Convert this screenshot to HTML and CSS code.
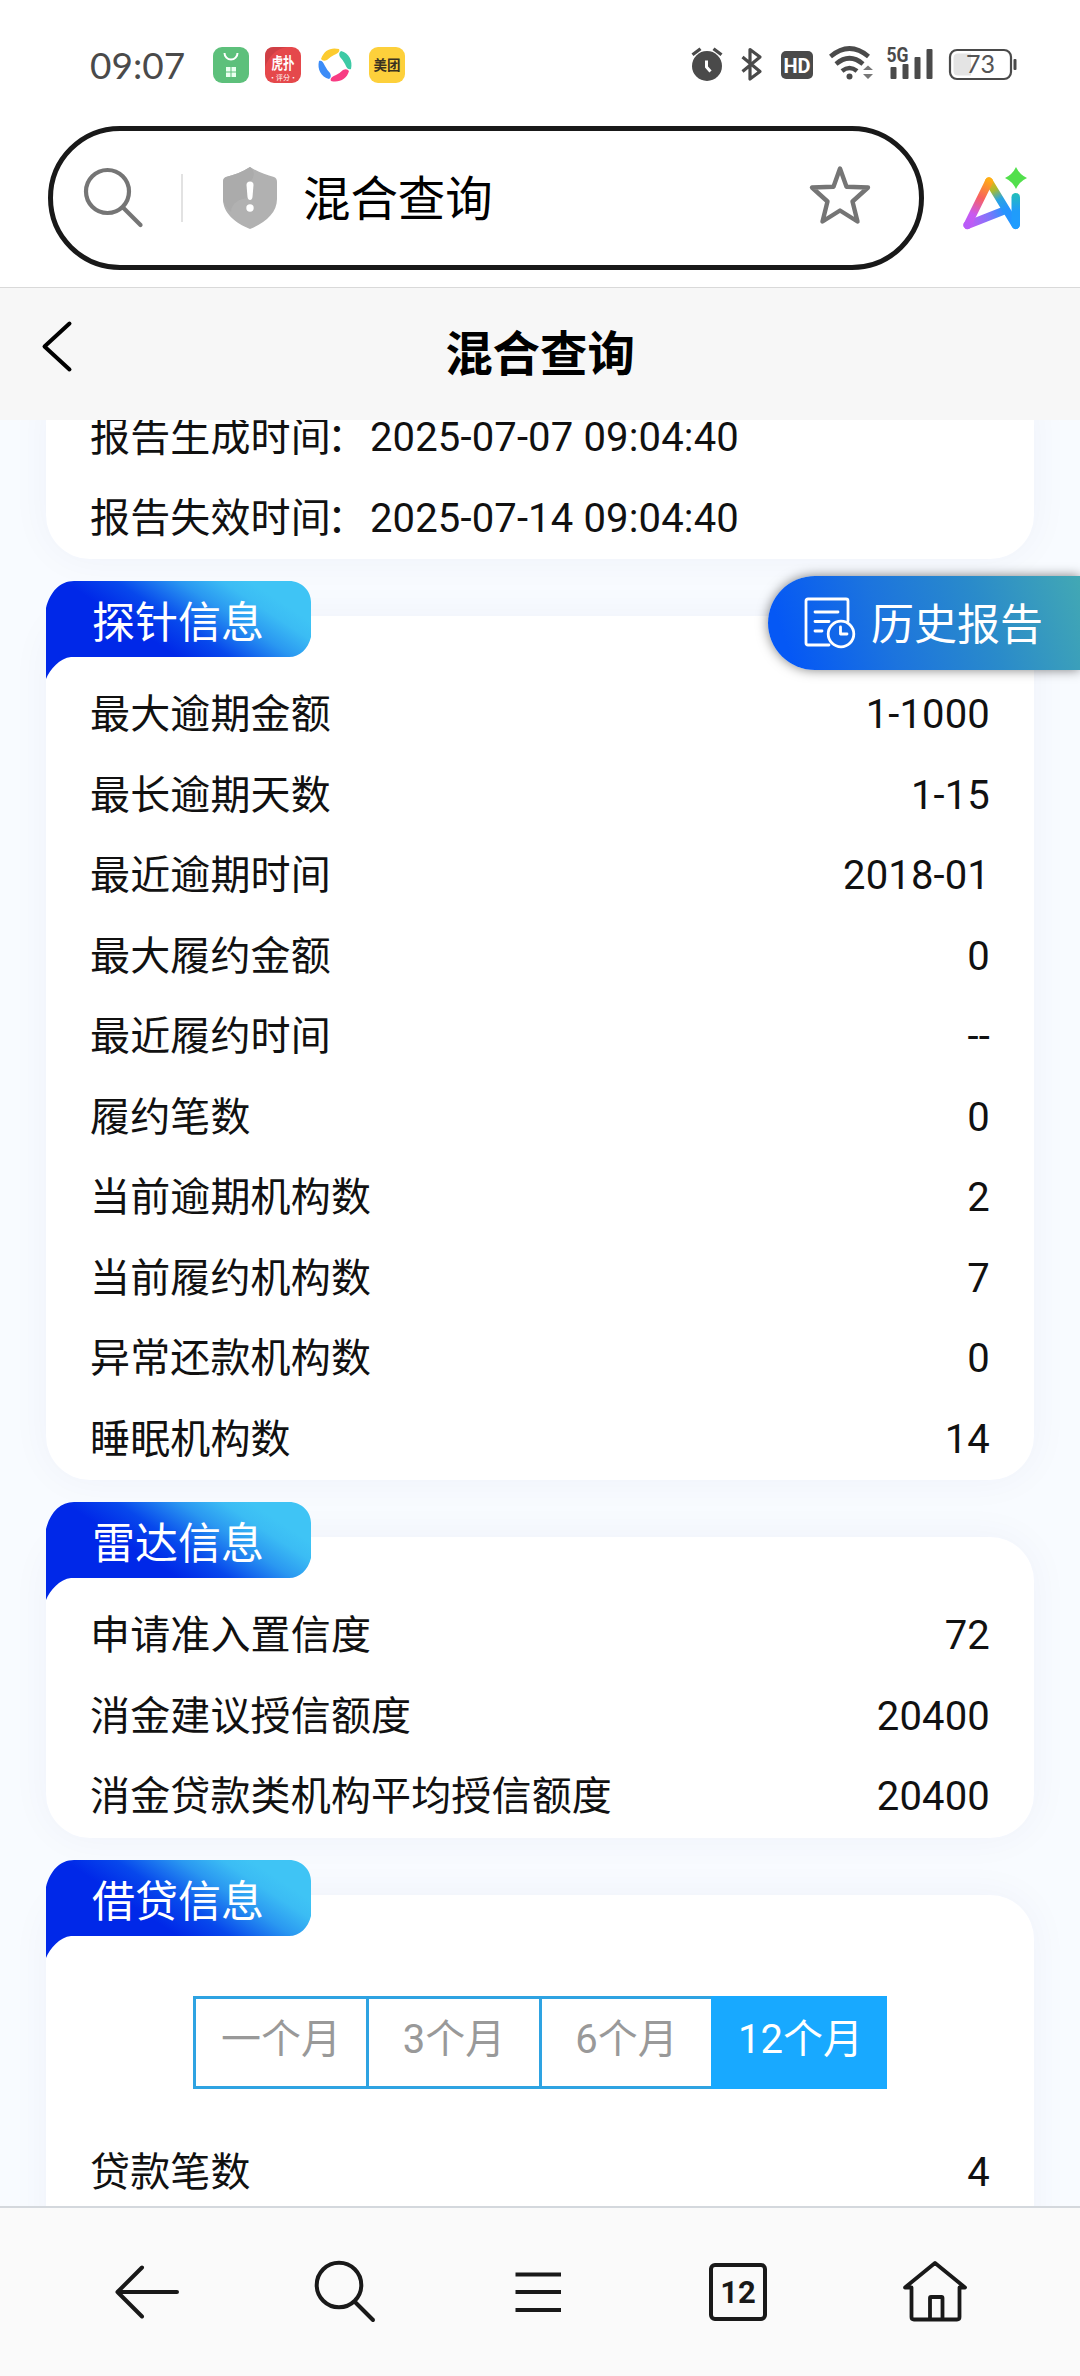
FILE: index.html
```html
<!DOCTYPE html>
<html lang="zh-CN">
<head>
<meta charset="utf-8">
<title>混合查询</title>
<link rel="stylesheet" href="styles.css">
</head>
<body>
<svg class="defs" width="0" height="0" aria-hidden="true">
  <defs>
    <linearGradient id="tagFill" gradientUnits="userSpaceOnUse" x1="5" y1="-8" x2="62" y2="-94">
      <stop offset="0" stop-color="#0028e8"/>
      <stop offset=".28" stop-color="#0748ec"/>
      <stop offset=".62" stop-color="#2a98f1"/>
      <stop offset=".85" stop-color="#3bbcf4"/>
      <stop offset="1" stop-color="#3fc4f5"/>
    </linearGradient>
    <symbol id="tagShape" viewBox="0 0 265 98">
      <path fill="url(#tagFill)" d="M0 27C4 11 14 0 28 0H243C256 0 265 10 265 21V56C262 68 254 76 243 76H25C14 77 4 88 0 98Z"/>
    </symbol>
  </defs>
</svg>
<div class="screen">
  <header class="status">
    <span class="clock">09:07</span>
    <div class="apps">
      <svg width="36" height="36" viewBox="0 0 36 36"><rect width="36" height="36" rx="9" fill="#5dc07b"/><path d="M11.500 6a6.500 6.500 0 0 0 13 0" fill="none" stroke="#fff" stroke-width="2"/><path d="M13 20h4.500v4.500H13zM18.500 20H23v4.500h-4.500zM13 25.500h4.500V30H13zM18.500 25.500H23V30h-4.500z" fill="#eafff0"/></svg>
      <svg width="36" height="36" viewBox="0 0 36 36"><rect width="36" height="36" rx="9" fill="#e5484b"/><path d="M0 20C4 10 10 2 22 0H9Q0 0 0 9z" fill="#cf3f45"/><text x="18" y="22" text-anchor="middle" class="app-glyph app-red" textLength="23" lengthAdjust="spacingAndGlyphs">虎扑</text><text x="18" y="32.500" text-anchor="middle" class="app-sub">·评分·</text></svg>
      <svg width="36" height="36" viewBox="0 0 36 36"><path d="M4 12C7 3 14 0 22 2C23 4 22 6 17 8Q13 10 10 13Q6 15 4 12z" fill="#fccb2f"/><path d="M24 4C32 6 36 14 34 22C32 23 30 22 28 17Q26 13 23 10Q21 6 24 4z" fill="#3dcaa5"/><path d="M32 24C30 32 22 36 14 34C13 32 14 30 19 28Q23 26 26 23Q30 21 32 24z" fill="#f83c83"/><path d="M12 32C4 30 0 22 2 14C4 13 6 14 8 19Q10 23 13 26Q15 30 12 32z" fill="#3c8cf7"/></svg>
      <svg width="36" height="36" viewBox="0 0 36 36"><rect width="36" height="36" rx="9" fill="#fdd03b"/><text x="18" y="23" text-anchor="middle" class="app-glyph app-yellow">美团</text></svg>
    </div>
    <div class="signals">
      <svg width="326" height="36" viewBox="691 45 326 36">
        <g fill="#4a4a4a">
          <circle cx="707" cy="66" r="15"/>
          <path d="M691.500 53.500l8-6 2 2.500-8 6zM722.500 53.500l-8-6-2 2.500 8 6z"/>
          <path d="M706.500 60.500v6.500l4 4.500" fill="none" stroke="#fff" stroke-width="3"/>
          <path d="M742.500 57L760 71.500l-10 7.500V49.500l10 7.500L742.500 71.500" fill="none" stroke="#4a4a4a" stroke-width="3.200" stroke-linejoin="round"/>
          <rect x="781" y="51" width="32" height="28" rx="5"/>
          <text x="797" y="72.500" text-anchor="middle" class="hd">HD</text>
          <g fill="none" stroke="#4a4a4a" stroke-width="4.600">
            <path d="M830.500 56.500Q849.500 40.500 868.500 56.500"/>
            <path d="M836 64Q849.500 52.500 863 64"/>
            <path d="M842 71Q849.500 65 857 71"/>
          </g>
          <circle cx="849.500" cy="76.500" r="3"/>
          <path d="M863 70l5-4.500 5 4.500zM863 74l5 5 5-5z" fill="#777"/>
          <text x="886.500" y="61.500" class="fiveg" textLength="22" lengthAdjust="spacingAndGlyphs">5G</text>
          <rect x="890.500" y="67" width="6" height="12" rx="1"/><rect x="902.500" y="64" width="6" height="15" rx="1"/><rect x="914.500" y="57" width="6" height="22" rx="1"/><rect x="926.500" y="49" width="6" height="30" rx="1"/>
          <rect x="950" y="50" width="61" height="29" rx="7" fill="#fff" stroke="#4a4a4a" stroke-width="2.200"/>
          <path d="M958 53.500h13v22h-13q-4.500 0-4.500-4.500v-13q0-4.500 4.500-4.500z" fill="#e4e4e4"/>
          <text x="980.500" y="73" text-anchor="middle" class="pct">73</text>
          <rect x="1013.500" y="59" width="3" height="11" rx="1"/>
        </g>
      </svg>
    </div>
  </header>

  <div class="address">
    <div class="pill">
      <svg class="pill-search" width="62" height="64" viewBox="82 166 62 64"><g fill="none" stroke="#757575" stroke-width="4.200" stroke-linecap="round"><circle cx="107.500" cy="191.500" r="21.500"/><path d="M123.500 208L140.500 225"/></g></svg>
      <span class="pill-line"></span>
      <svg class="pill-shield" width="54" height="62" viewBox="0 0 54 62"><path d="M27 0C35 5 43 8 51 10Q54 11 54 15V32C54 46 42 56 27 62C12 56 0 46 0 32V15Q0 11 3 10C11 8 19 5 27 0z" fill="#b1b1b1"/><path d="M3 10C11 8 19 5 27 0C32 4 32 10 27 15V31C17 31 8 36 8 45Q0 38 0 32V15Q0 11 3 10z" fill="#ababab"/><path d="M23.500 18q0-3.500 3.500-3.500t3.500 3.500l-1 12q-.5 3-2.500 3t-2.500-3z" fill="#fff"/><circle cx="27" cy="41" r="3.700" fill="#fff"/></svg>
      <span class="pill-text">混合查询</span>
      <svg class="pill-star" width="62" height="60" viewBox="809 165 62 60"><path d="M840 168.500L846.500 186.800L868 187.500L852.500 201.500L857.500 221.500L840 210.500L822.500 221.500L827.500 201.500L812 187.500L833.500 186.800Z" fill="none" stroke="#757575" stroke-width="4.400" stroke-linejoin="round"/></svg>
    </div>
    <svg class="ai" width="66" height="64" viewBox="962 166 66 64">
      <defs>
        <linearGradient id="aiA" gradientUnits="userSpaceOnUse" x1="989" y1="179" x2="968" y2="226"><stop offset="0" stop-color="#ffae12"/><stop offset=".4" stop-color="#f8615f"/><stop offset=".75" stop-color="#c95af0"/><stop offset="1" stop-color="#b85cf8"/></linearGradient>
        <linearGradient id="aiB" gradientUnits="userSpaceOnUse" x1="989" y1="179" x2="1005" y2="210"><stop offset="0" stop-color="#ffae12"/><stop offset=".35" stop-color="#a9bb30"/><stop offset=".65" stop-color="#2aa4e0"/><stop offset="1" stop-color="#2494ff"/></linearGradient>
        <linearGradient id="aiC" gradientUnits="userSpaceOnUse" x1="968" y1="225" x2="1004" y2="210"><stop offset="0" stop-color="#c85af3"/><stop offset=".6" stop-color="#7d75fb"/><stop offset="1" stop-color="#2494ff"/></linearGradient>
        <linearGradient id="aiD" x1="0" y1="0" x2="0" y2="1"><stop offset="0" stop-color="#22bfb8"/><stop offset=".5" stop-color="#1f9cfa"/><stop offset="1" stop-color="#1f9cff"/></linearGradient>
      </defs>
      <g fill="none" stroke-width="8" stroke-linecap="round" stroke-linejoin="round">
        <path d="M967.500 225L1003 211" stroke="url(#aiC)"/>
        <path d="M989 181.500L1015.500 225" stroke="url(#aiB)"/>
        <path d="M989 181.500L967.500 225" stroke="url(#aiA)"/>
      </g>
      <rect x="1011.500" y="193" width="8.500" height="36" rx="4.200" fill="url(#aiD)"/>
      <path d="M1016 167Q1019.500 174.500 1027 178Q1019.500 181.500 1016 189Q1012.500 181.500 1005 178Q1012.500 174.500 1016 167z" fill="#52df4c"/>
    </svg>
  </div>

  <div class="titlebar">
    <svg class="back" width="32" height="54" viewBox="0 0 32 54"><path d="M28.500 3.500L3.500 26.500L28.500 49.500" fill="none" stroke="#000" stroke-width="4" stroke-linecap="round" stroke-linejoin="round"/></svg>
    <h1>混合查询</h1>
  </div>

  <main class="content">
    <section class="card card-report">
      <div class="row"><span>报告生成时间</span><span class="colon">：</span><span>2025-07-07 09:04:40</span></div>
      <div class="row"><span>报告失效时间</span><span class="colon">：</span><span>2025-07-14 09:04:40</span></div>
    </section>

    <section class="card">
      <div class="tag"><svg width="265" height="98"><use href="#tagShape"/></svg><h2>探针信息</h2></div>
      <div class="row"><span>最大逾期金额</span><span>1-1000</span></div>
      <div class="row"><span>最长逾期天数</span><span>1-15</span></div>
      <div class="row"><span>最近逾期时间</span><span>2018-01</span></div>
      <div class="row"><span>最大履约金额</span><span>0</span></div>
      <div class="row"><span>最近履约时间</span><span>--</span></div>
      <div class="row"><span>履约笔数</span><span>0</span></div>
      <div class="row"><span>当前逾期机构数</span><span>2</span></div>
      <div class="row"><span>当前履约机构数</span><span>7</span></div>
      <div class="row"><span>异常还款机构数</span><span>0</span></div>
      <div class="row"><span>睡眠机构数</span><span>14</span></div>
    </section>

    <section class="card">
      <div class="tag"><svg width="265" height="98"><use href="#tagShape"/></svg><h2>雷达信息</h2></div>
      <div class="row"><span>申请准入置信度</span><span>72</span></div>
      <div class="row"><span>消金建议授信额度</span><span>20400</span></div>
      <div class="row"><span>消金贷款类机构平均授信额度</span><span>20400</span></div>
    </section>

    <section class="card card-loan">
      <div class="tag"><svg width="265" height="98"><use href="#tagShape"/></svg><h2>借贷信息</h2></div>
      <div class="tabs"><span>一个月</span><span>3个月</span><span>6个月</span><span class="active">12个月</span></div>
      <div class="row"><span>贷款笔数</span><span>4</span></div>
    </section>
  </main>

  <div class="history">
    <svg width="52" height="52" viewBox="0 0 52 52"><g fill="none" stroke="#fff" stroke-width="2.800" stroke-linecap="round" stroke-linejoin="round"><path d="M25 48H4Q2 48 2 46V4Q2 2 4 2H42Q44 2 44 4V24"/><path d="M11 15H34M11 24.500H25M11 34H18"/><circle cx="37" cy="37" r="12.800"/><path d="M36.500 30V37H43"/></g></svg>
    <span>历史报告</span>
  </div>

  <nav class="toolbar">
    <svg width="66" height="64" viewBox="0 0 66 64"><path d="M63 32H3.500M28 7.500L3.500 32L28 56.500" fill="none" stroke="#191919" stroke-width="4" stroke-linecap="round" stroke-linejoin="round"/></svg>
    <svg width="64" height="64" viewBox="0 0 64 64"><g fill="none" stroke="#191919" stroke-width="4" stroke-linecap="round"><circle cx="26" cy="25" r="22.300"/><path d="M42.500 42.500L60 60"/></g></svg>
    <svg width="64" height="64" viewBox="0 0 64 64"><path d="M6.500 14.500H52M6.500 32H52M6.500 50H52" stroke="#191919" stroke-width="4"/></svg>
    <svg width="64" height="64" viewBox="0 0 64 64"><rect x="5" y="5" width="54" height="54" rx="4" fill="none" stroke="#191919" stroke-width="4"/><text x="32" y="43" text-anchor="middle" class="count">12</text></svg>
    <svg width="66" height="64" viewBox="0 0 66 64"><path d="M3 27.500L33 3L63 27.500H57.500V57Q57.500 59.500 55 59.500H12Q9.500 59.500 9.500 57V27.500ZM28 59V38Q28 37 29 37H39.500Q40.500 37 40.500 38V59" fill="none" stroke="#191919" stroke-width="3.800" stroke-linejoin="round"/></svg>
  </nav>
</div>
</body>
</html>
```
FILE: styles.css
```css
* { box-sizing: border-box; }
body { margin: 0; background: #fff; font-family: Roboto, "Noto Sans CJK SC", sans-serif; color: #111; }
svg { display: block; flex: none; overflow: visible; }
h1, h2 { margin: 0; font-weight: 400; }
.defs { position: absolute; }

.screen { position: relative; width: 1080px; height: 2376px; display: flex; flex-direction: column; overflow: hidden; }

.status { height: 126px; padding: 45px 63px 0 90px; display: flex; align-items: flex-start; flex: none; }
.clock { width: 123px; font: 37px/40px Lato, sans-serif; color: #4a4a4a; }
.apps { display: flex; gap: 16px; padding-top: 2px; }
.signals { margin-left: auto; }
.app-glyph { font-family: "Noto Sans CJK SC", sans-serif; font-weight: 700; }
.app-red { font-size: 16px; fill: #fff; }
.app-sub { font-family: "Noto Sans CJK SC", sans-serif; font-size: 7px; fill: #fff; }
.app-yellow { font-size: 13.5px; fill: #3a3220; }
.hd { font: 700 20px Roboto, sans-serif; fill: #fff; }
.fiveg { font: 700 20px Roboto, sans-serif; }
.pct { font: 25px Lato, sans-serif; fill: #555; }

.address { height: 161px; padding-left: 48px; display: flex; align-items: flex-start; flex: none; }
.pill { width: 876px; height: 144px; border: 5px solid #191919; border-radius: 72px; padding: 0 48px 0 29px; display: flex; align-items: center; }
.pill-line { width: 2px; height: 48px; background: #e2e2e2; margin: 0 40px 0 37px; }
.pill-text { font-size: 47.4px; line-height: 60px; color: #000; margin: 4px 0 0 26px; }
.pill-star { margin-left: auto; margin-top: -6px; }
.ai { margin: 40px 0 0 38px; }

.titlebar { height: 133px; border-top: 1px solid #d9d9d9; background: #f7f7f7; display: grid; grid-template-columns: 1fr auto 1fr; flex: none; }
.back { margin: 32px 0 0 41px; }
.titlebar h1 { grid-column: 2; font-size: 47.4px; line-height: 60px; font-weight: 700; color: #000; margin-top: 37px; }

.content { flex: 1; min-height: 0; overflow: hidden; background: #f8fbff; padding: 0 46px; display: flex; flex-direction: column; gap: 57px; }
.card { position: relative; flex: none; background: #fff; border-radius: 44px; padding: 59px 44px 0; box-shadow: 0 0 40px rgba(20, 50, 110, .045); }
.card-report { height: 162px; margin-top: -23px; padding-top: 1px; border-radius: 0 0 44px 44px; }
.row { height: 80.5px; display: flex; align-items: center; justify-content: space-between; font-size: 40px; line-height: 56px; letter-spacing: .15px; }
.card-report .row { justify-content: flex-start; }
.colon { width: 39px; text-indent: -4px; }
.tag { position: absolute; left: 0; top: -35px; }
.tag h2 { position: absolute; left: 46px; top: 12px; font-size: 43px; line-height: 60px; color: #fff; white-space: nowrap; }
.card-loan { padding-top: 101px; height: 400px; }
.tabs { width: 694px; height: 93px; margin: 0 auto 44px; border: 3px solid #2ea3e2; display: grid; grid-template-columns: 170px 173px 172px 1fr; }
.tabs span { display: flex; align-items: center; justify-content: center; font-size: 40px; line-height: 56px; color: #999; border-left: 3px solid #2ea3e2; padding-bottom: 4px; }
.tabs span:first-child { border-left: 0; }
.tabs .active { background: #18a9ff; color: #fff; border-color: #18a9ff; margin: -3px -3px -3px 0; }

.history { position: absolute; right: 0; top: 576px; width: 312px; height: 94px; padding-left: 36px; display: flex; align-items: center; gap: 15px; border-radius: 47px 0 0 47px; background: linear-gradient(70deg, #0558f5 8%, #1c74de 38%, #2a8bca 68%, #42a8b4 100%); box-shadow: 0 0 12px rgba(0, 0, 0, .5); color: #fff; font-size: 43px; line-height: 60px; }
.history span { margin-top: 4px; }

.toolbar { height: 170px; border-top: 2px solid #d4d8dd; background: #fafafa; padding: 52px 112px 0 114px; display: flex; justify-content: space-between; align-items: flex-start; flex: none; }
.count { font: 700 31px Roboto, sans-serif; fill: #191919; }
```
